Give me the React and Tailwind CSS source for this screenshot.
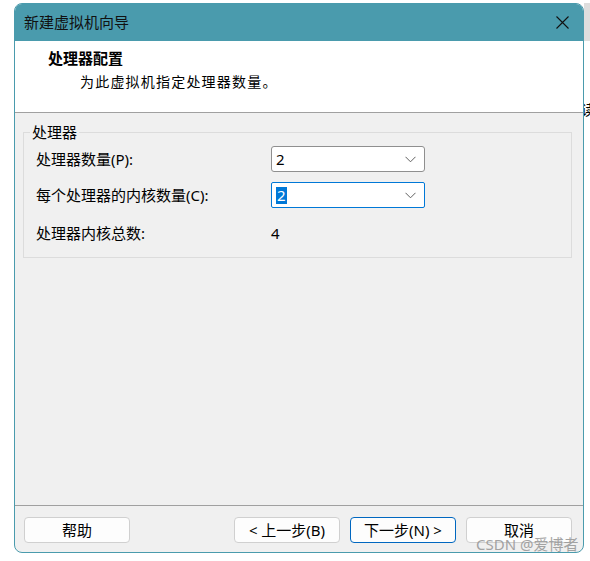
import React from "react";

const FONT = { fontFamily: '"Noto Sans", "Noto Sans CJK SC", sans-serif' };

function Chevron() {
  return (
    <svg width="11" height="7" viewBox="0 0 11 7" className="shrink-0">
      <path d="M0.5 0.8 L5.5 5.8 L10.5 0.8" fill="none" stroke="#606060" strokeWidth="1" />
    </svg>
  );
}

function Btn({ children, primary }) {
  return (
    <div
      className={
        "w-[106px] h-[26px] rounded-[4px] bg-[#fdfdfd] flex items-center justify-center text-[15px] text-black " +
        (primary ? "border border-[#0067c0]" : "border border-[#d0d0d0]")
      }
    >
      {children}
    </div>
  );
}

export default function App() {
  return (
    <div className="w-[590px] h-[561px] bg-white relative overflow-hidden flex" style={FONT}>
      <div className="ml-[14px] mt-[3px] w-[570px] h-[550px] rounded-[8px] border border-[#4a9bad] bg-[#f0f0f0] flex flex-col overflow-hidden shrink-0">
        {/* title bar */}
        <div className="h-[37px] bg-[#4a9bad] flex items-center justify-between pl-[9px] pr-[14px] shrink-0">
          <span className="text-[15px] text-[#111]">新建虚拟机向导</span>
          <svg width="13" height="13" viewBox="0 0 13 13">
            <path d="M0.5 0.5 L12.5 12.5 M12.5 0.5 L0.5 12.5" stroke="#111" strokeWidth="1.1" />
          </svg>
        </div>
        {/* header */}
        <div className="h-[72px] bg-white border-b border-[#a0a0a0] shrink-0 pl-[33px] pt-[6px]">
          <div className="text-[15px] font-bold text-black leading-[22px]">处理器配置</div>
          <div className="text-[14px] text-black leading-[22px] pl-[32px] mt-[2px] tracking-[1.2px]">为此虚拟机指定处理器数量。</div>
        </div>
        {/* content */}
        <div className="flex-1 pl-[8px] pr-[11px] pt-[9px]">
          <fieldset className="border border-[#dcdcdc] h-[136px] px-[12px]">
            <legend className="ml-[-6px] px-[2px] text-[15px] leading-[20px] text-black">处理器</legend>
            <div className="flex flex-col gap-[10px] mt-[4px]">
              <div className="flex items-center h-[26px]">
                <div className="w-[235px] text-[15px] text-black">处理器数量(P):</div>
                <div className="w-[154px] h-[26px] bg-white border border-[#8f8f8f] rounded-[3px] flex items-center justify-between pl-[4px] pr-[8px] text-[15px] text-black">
                  <span>2</span>
                  <Chevron />
                </div>
              </div>
              <div className="flex items-center h-[26px]">
                <div className="w-[235px] text-[15px] text-black">每个处理器的内核数量(C):</div>
                <div className="w-[154px] h-[26px] bg-white border border-[#0078d7] rounded-[2px] flex items-center justify-between pl-[4px] pr-[8px] text-[15px]">
                  <span className="bg-[#0078d7] text-white leading-[17px] px-[1px]">2</span>
                  <Chevron />
                </div>
              </div>
              <div className="flex items-center h-[26px] mt-[2px]">
                <div className="w-[235px] text-[15px] text-black">处理器内核总数:</div>
                <div className="text-[15px] text-black">4</div>
              </div>
            </div>
          </fieldset>
        </div>
        {/* footer */}
        <div className="h-[47px] border-t border-[#a0a0a0] shrink-0 flex items-start justify-between pl-[9px] pr-[11px] pt-[11px]">
          <Btn>帮助</Btn>
          <div className="flex gap-[10px]">
            <Btn>&lt; 上一步(B)</Btn>
            <Btn primary>下一步(N) &gt;</Btn>
            <Btn>取消</Btn>
          </div>
        </div>
      </div>
      {/* background window strip */}
      <div className="flex-1 flex flex-col overflow-hidden">
        <div className="h-[3px] bg-white" />
        <div className="h-[38px] bg-[#dedede]" />
        <div className="flex-1 bg-white relative overflow-hidden">
          <span className="absolute left-[-3px] top-[62px] text-[14px] text-black leading-none">读</span>
        </div>
      </div>
      {/* watermark */}
      <div className="absolute left-[476px] top-[535px] text-[15px] text-[#9a9a9a] opacity-90 leading-[18px]">CSDN @爱博者</div>
    </div>
  );
}
